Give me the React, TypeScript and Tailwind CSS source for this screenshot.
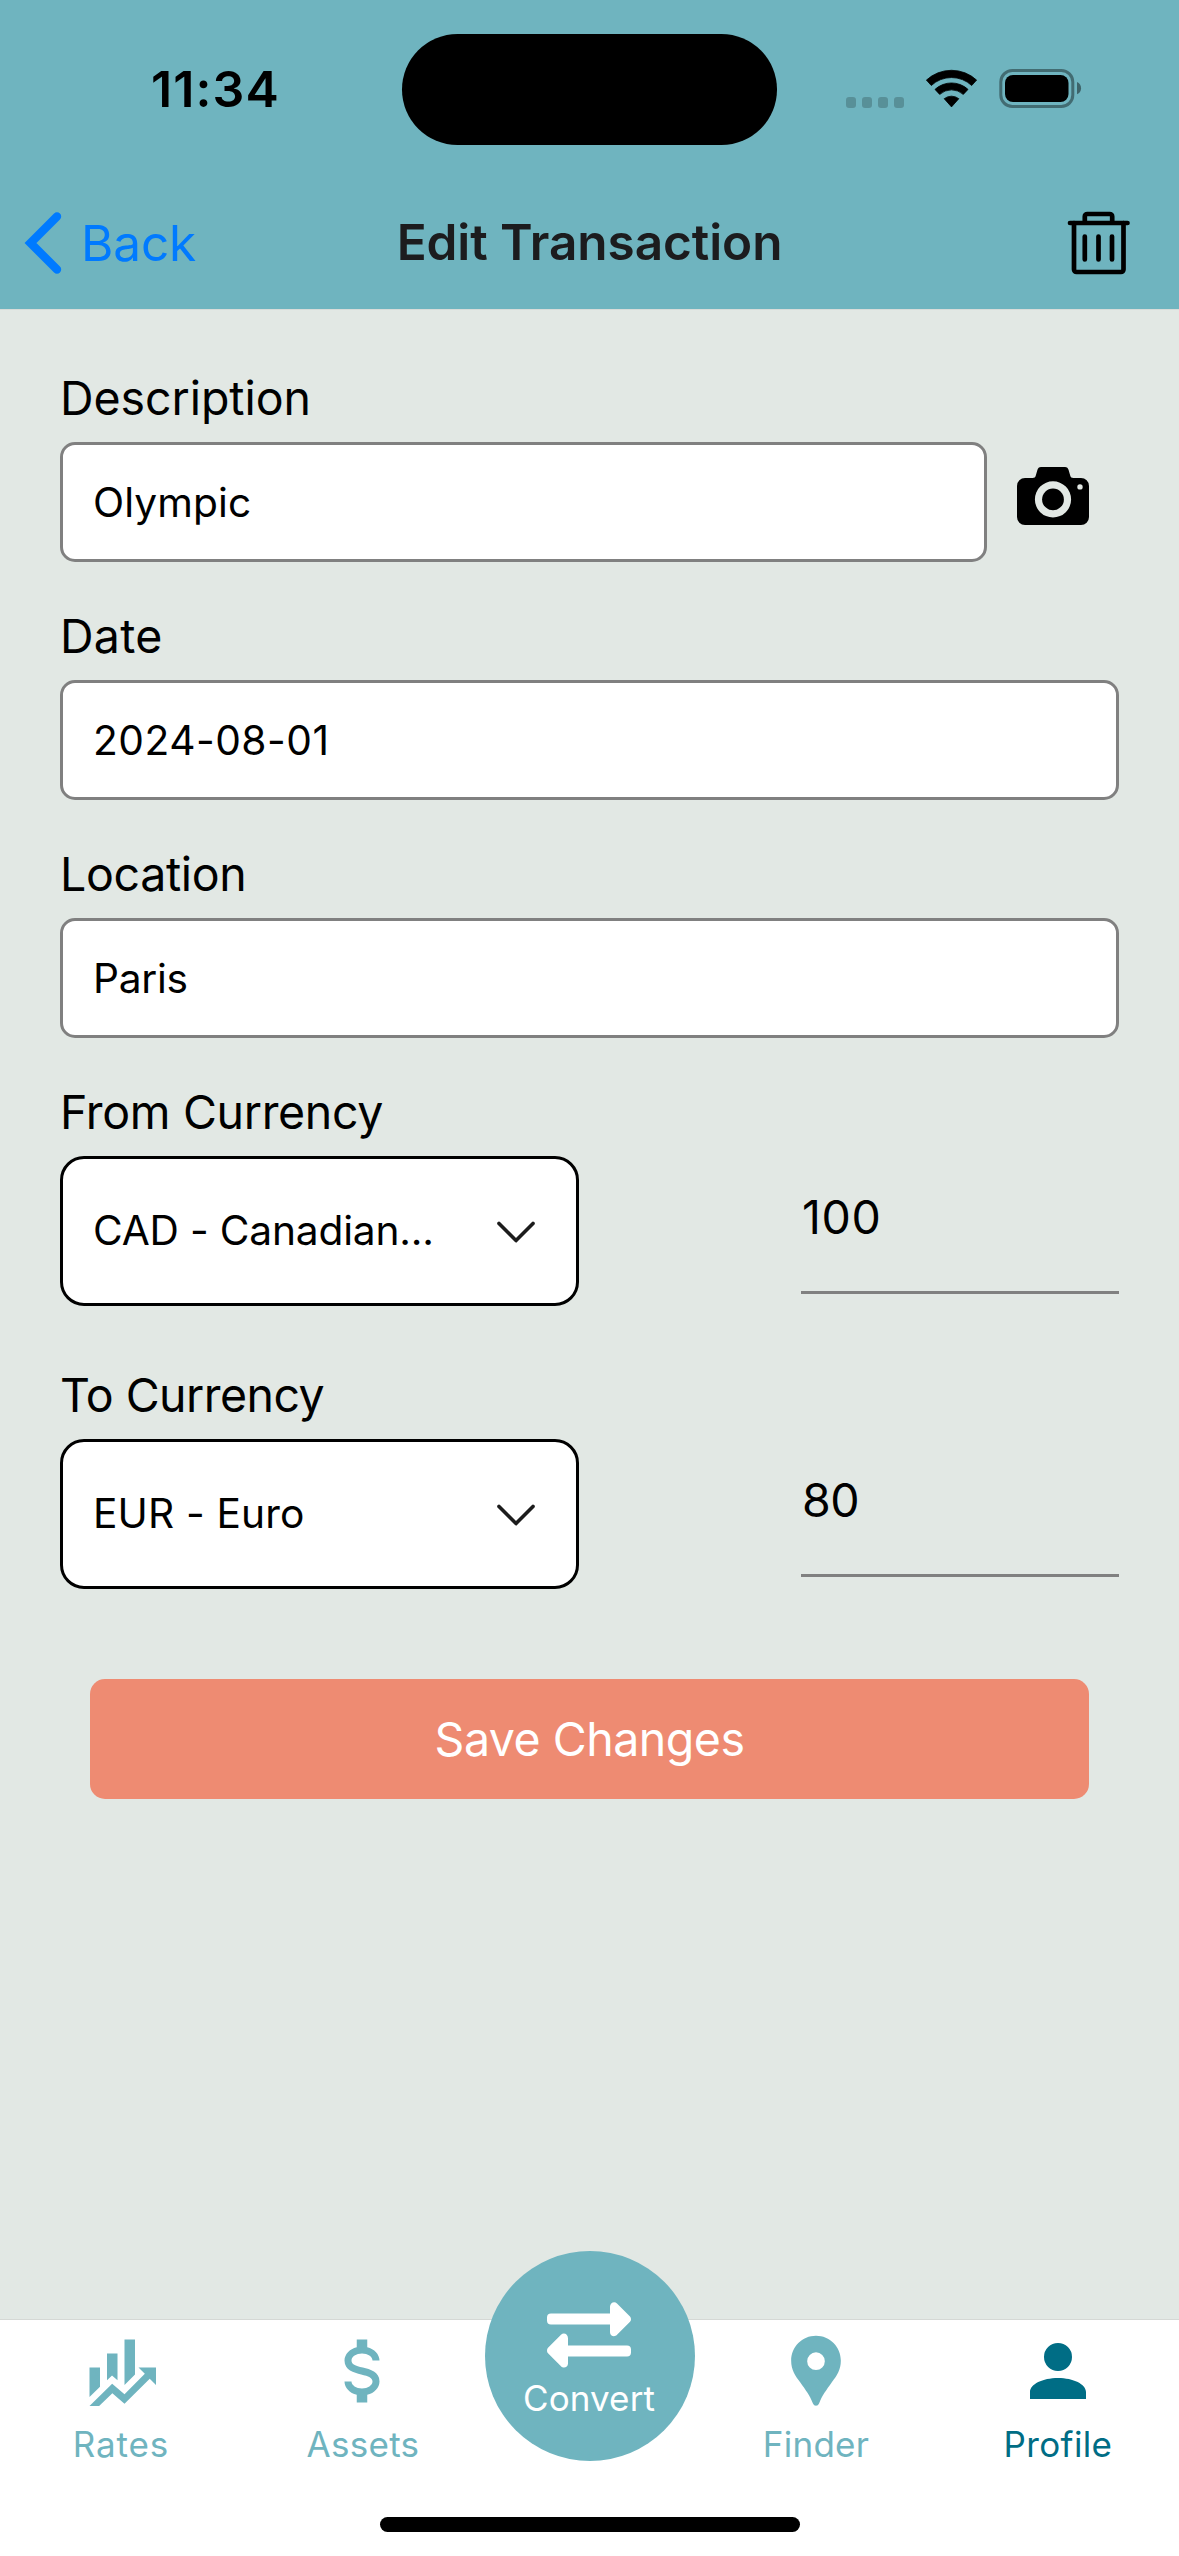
import type { ReactNode } from "react";

function StatusIcons() {
  return (
    <svg width="236" height="39" viewBox="0 0 236 39">
      <g fill="#000" fillOpacity="0.2">
        <rect x="0" y="28" width="10" height="11" rx="3" />
        <rect x="16" y="28" width="10" height="11" rx="3" />
        <rect x="32" y="28" width="10" height="11" rx="3" />
        <rect x="48" y="28" width="10" height="11" rx="3" />
      </g>
      <g stroke="#000" strokeWidth="0.8" strokeLinejoin="round">
        <path d="M80.4 11.1A37 37 0 0 1 130.6 11.1L125.7 16.5A29.6 29.6 0 0 0 85.3 16.5Z" />
        <path d="M89 20.4A24.3 24.3 0 0 1 122 20.4L117.3 25.4A17.6 17.6 0 0 0 93.7 25.4Z" />
        <path d="M98.2 29.7A11.8 11.8 0 0 1 112.8 29.7L105.5 37.9Z" />
      </g>
      <rect x="154.8" y="1.5" width="72" height="36" rx="11.5" fill="none" stroke="#000" strokeOpacity="0.4" strokeWidth="3" />
      <rect x="159" y="6" width="63.5" height="27" rx="8" />
      <path d="M231 13C236.4 15 236.4 23.3 231 25.2Z" fillOpacity="0.45" />
    </svg>
  );
}

function TrashIcon() {
  return (
    <svg className="-mt-[1px] mr-[48px]" width="64" height="64" viewBox="0 0 64 64" fill="none" stroke="#000" strokeWidth="4.7" strokeLinecap="round" strokeLinejoin="round">
      <path d="M3 12H60.5M17.8 11V5.5A2.5 2.5 0 0 1 20.3 3H42.7A2.5 2.5 0 0 1 45.2 5.5V11" />
      <path d="M7 12V58.5A2.5 2.5 0 0 0 9.5 61H54A2.5 2.5 0 0 0 56.5 58.5V12" />
      <path d="M17.8 25.5V48.5M31.5 25.5V48.5M45 25.5V48.5" />
    </svg>
  );
}

function CameraIcon() {
  return (
    <svg className="mt-[25px]" width="72" height="58" viewBox="0 0 72 58">
      <path
        fillRule="evenodd"
        d="M8 11H15.5C17.6 11 18.2 10.3 18.8 8.5L20.4 3C21 1 22 0 24 0H48C50 0 51 1 51.6 3L53.2 8.5C53.8 10.3 54.4 11 56.5 11H64A8 8 0 0 1 72 19V50A8 8 0 0 1 64 58H8A8 8 0 0 1 0 50V19A8 8 0 0 1 8 11ZM36 14.3A18.1 18.1 0 1 0 36 50.5A18.1 18.1 0 1 0 36 14.3ZM63 17.2A2.7 2.7 0 1 0 63 22.6A2.7 2.7 0 1 0 63 17.2Z"
      />
      <circle cx="36" cy="32.4" r="10.9" />
    </svg>
  );
}

function ConvertIcon() {
  return (
    <svg width="84" height="66" viewBox="0 0 252 197" fill="#fff">
      <path d="M12 34H189V14C189 2 202 -4 210 4L249 43C253 48 253 55 249 59L210 98C202 107 189 101 189 90V67H12C4 67 0 63 0 55V46C0 38 4 34 12 34Z" />
      <path d="M240 130H63V108C63 96 50 90 42 98L3 137C-1 142 -1 149 3 153L42 192C50 201 63 195 63 184V163H240C248 163 252 159 252 151V142C252 134 248 130 240 130Z" />
    </svg>
  );
}

function Label({ children, className = "" }: { children: ReactNode; className?: string }) {
  return <div className={`mb-[15px] h-[58px] whitespace-nowrap text-[46.5px] leading-[58px] ${className}`}>{children}</div>;
}

function Input({ value, className = "" }: { value: string; className?: string }) {
  return (
    <div className={`flex h-[120px] w-full items-center rounded-[15px] border-[3px] border-[#808080] bg-white pl-[30px] pt-[2px] text-[40.7px] ${className}`}>
      {value}
    </div>
  );
}

function CurrencyRow({ value, valueClass, amount, amountClass }: { value: string; valueClass: string; amount: string; amountClass: string }) {
  return (
    <div className="flex items-start justify-between">
      <div className="flex h-[150px] w-[519px] items-center justify-between rounded-[24px] border-[3px] border-black bg-white pl-[30px] pr-[40px] text-[40.7px]">
        <span className={`whitespace-nowrap ${valueClass}`}>{value}</span>
        <svg className="mt-[2px]" width="40" height="24" viewBox="0 0 40 24" fill="none" stroke="#1c1c1c" strokeWidth="3.6" strokeLinecap="round" strokeLinejoin="round">
          <path d="M3 3.4L20 20.6L37 3.4" />
        </svg>
      </div>
      <div className={`flex h-[138px] w-[318px] items-center border-b-[3px] border-[#808080] pb-[11px] pl-[1px] text-[46.5px] ${amountClass}`}>{amount}</div>
    </div>
  );
}

const glyphs = {
  rates: "M6,16.5L3,19.44V11H6M11,14.66L9.43,13.32L8,14.64V7H11M16,13L13,16V3H16M18.81,12.81L17,11H22V16L20.21,14.21L13,21.36L9.53,18.34L5.75,22H3L9.47,15.66L13,18.64",
  assets:
    "M7,15H9C9,16.08 10.37,17 12,17C13.63,17 15,16.08 15,15C15,13.9 13.96,13.5 11.76,12.97C9.64,12.44 7,11.78 7,9C7,7.21 8.47,5.69 10.5,5.18V3H13.5V5.18C15.53,5.69 17,7.21 17,9H15C15,7.92 13.63,7 12,7C10.37,7 9,7.92 9,9C9,10.1 10.04,10.5 12.24,11.03C14.36,11.56 17,12.22 17,15C17,16.79 15.53,18.31 13.5,18.82V21H10.5V18.82C8.47,18.31 7,16.79 7,15Z",
  profile: "M12,4A4,4 0 0,1 16,8A4,4 0 0,1 12,12A4,4 0 0,1 8,8A4,4 0 0,1 12,4M12,14C16.42,14 20,15.79 20,18V20H4V18C4,15.79 7.58,14 12,14Z",
};

function Glyph({ d, className = "" }: { d: string; className?: string }) {
  return (
    <svg className={className} width="84" height="84" viewBox="0 0 24 24" fill="currentColor">
      <path d={d} />
    </svg>
  );
}

function PinIcon() {
  return (
    <svg width="84" height="84" viewBox="0 0 252 252" fill="currentColor">
      <path
        transform="translate(51.5 20)"
        fillRule="evenodd"
        d="M74.5 0C33 0 0 33 0 75C0 103 12 119 27 140C44 164 56 180 65 203C69 213 80 213 84 203C93 180 105 164 122 140C137 119 149 103 149 75C149 33 116 0 74.5 0ZM74.5 50A26.5 26.5 0 1 1 74.5 103A26.5 26.5 0 1 1 74.5 50Z"
      />
    </svg>
  );
}

function Tab({ label, icon, className }: { label: string; icon: ReactNode; className: string }) {
  return (
    <div className={`flex flex-col items-center pt-[9px] ${className}`}>
      {icon}
      <span className="mt-[9px] whitespace-nowrap text-[35px] leading-[44px]">{label}</span>
    </div>
  );
}

export default function App() {
  return (
    <div className="flex h-[2556px] w-[1179px] flex-col overflow-hidden bg-[#e2e8e4] font-['Inter',sans-serif] text-black">
      <header className="h-[310px] border-b border-[#d8dcd9] bg-[#6fb4bf]">
        <div className="flex h-[177px] items-center">
          <div className="w-[402px] pl-[151px] text-[50px] font-semibold leading-none tracking-[1.1px]">11:34</div>
          <div className="mt-[1px] h-[111px] w-[375px] rounded-full bg-black" />
          <div className="pl-[69px]">
            <StatusIcons />
          </div>
        </div>
        <div className="flex h-[132px] items-center justify-between">
          <div className="flex w-[330px] items-center pl-[24px] text-[49.5px] leading-none tracking-[-0.15px] text-[#007aff]">
            <svg className="mr-[19px]" width="38" height="64" viewBox="0 0 38 64" fill="none" stroke="currentColor" strokeWidth="8.4" strokeLinecap="round">
              <path d="M33 5.5L6.5 32L33 58.5" />
            </svg>
            <span className="pt-[2px]">Back</span>
          </div>
          <div className="whitespace-nowrap text-[49.5px] font-semibold leading-none tracking-[-0.07px] text-[#1c1c1e]">Edit Transaction</div>
          <div className="flex w-[330px] justify-end">
            <TrashIcon />
          </div>
        </div>
      </header>

      <main className="flex-1 px-[60px] pt-[59px]">
        <Label className="tracking-[-0.06px]">Description</Label>
        <div className="flex items-start gap-[30px]">
          <Input value="Olympic" className="max-w-[927px] tracking-[0.1px]" />
          <CameraIcon />
        </div>
        <div className="mt-[45px]">
          <Label className="tracking-[0.3px]">Date</Label>
          <Input value="2024-08-01" className="tracking-[0.5px]" />
        </div>
        <div className="mt-[45px]">
          <Label className="tracking-[-0.35px]">Location</Label>
          <Input value="Paris" className="tracking-[-0.29px]" />
        </div>
        <div className="mt-[45px]">
          <Label className="tracking-[-0.32px]">From Currency</Label>
          <CurrencyRow value="CAD - Canadian..." valueClass="tracking-[-0.2px]" amount="100" amountClass="tracking-[0.6px]" />
        </div>
        <div className="mt-[60px]">
          <Label className="tracking-[-0.55px]">To Currency</Label>
          <CurrencyRow value="EUR - Euro" valueClass="tracking-[0.15px]" amount="80" amountClass="tracking-[-0.4px]" />
        </div>
        <button className="mx-[30px] mt-[90px] flex h-[120px] w-[999px] items-center justify-center rounded-[15px] bg-[#ee8b72] pt-[1px] text-[46.5px] tracking-[-0.5px] text-white">
          Save Changes
        </button>
      </main>

      <nav className="relative flex h-[237px] border-t border-[#d5d8d5] bg-white text-[#6fb4bf]">
        <Tab label="Rates" icon={<Glyph d={glyphs.rates} />} className="w-[242px] tracking-[0.87px]" />
        <Tab label="Assets" icon={<Glyph d={glyphs.assets} className="mr-[2px]" />} className="w-[242px] tracking-[0.28px]" />
        <div className="w-[216px]" />
        <Tab label="Finder" icon={<PinIcon />} className="w-[232px] tracking-[0.27px]" />
        <Tab label="Profile" icon={<Glyph d={glyphs.profile} />} className="w-[247px] pl-[5px] tracking-[0.36px] text-[#006d85]" />
        <div className="absolute -top-[69px] left-[485px] flex h-[210px] w-[210px] flex-col items-center rounded-full bg-[#6fb4bf] pr-[2px] pt-[51px] text-white">
          <ConvertIcon />
          <span className="mt-[8px] text-[35px] leading-[44px] tracking-[0.11px]">Convert</span>
        </div>
        <div className="absolute bottom-[24px] left-[380px] h-[15px] w-[420px] rounded-full bg-black" />
      </nav>
    </div>
  );
}
